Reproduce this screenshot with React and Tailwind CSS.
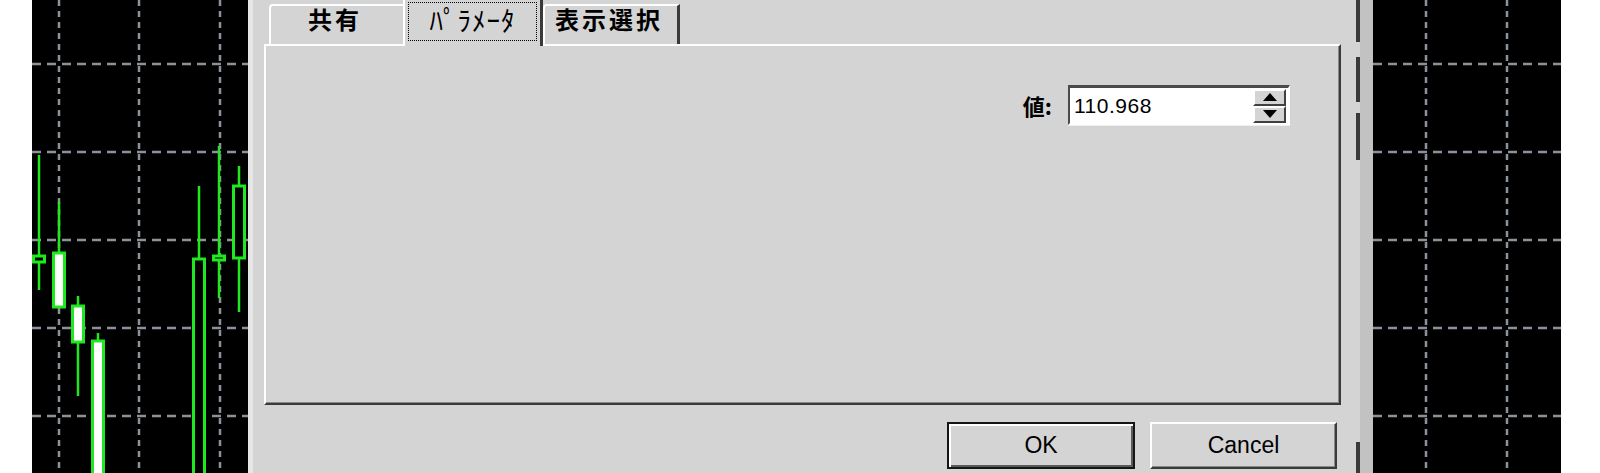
import React from 'react';

const GRID_Y = [64, 152, 240, 328, 416];

const leftCandles = [
  { x: 7, hi: 155, lo: 290, top: 256, bottom: 262, fill: '#000' },
  { x: 27, hi: 202, lo: 307, top: 253, bottom: 307, fill: '#fff' },
  { x: 46, hi: 296, lo: 396, top: 306, bottom: 342, fill: '#fff' },
  { x: 66, hi: 333, lo: 480, top: 341, bottom: 480, fill: '#fff' },
  { x: 167, hi: 186, lo: 480, top: 259, bottom: 480, fill: '#000' },
  { x: 187, hi: 146, lo: 298, top: 256, bottom: 260, fill: '#000' },
  { x: 207, hi: 166, lo: 312, top: 186, bottom: 258, fill: '#000' },
];

function Chart({ width, gridX, candles = [] }) {
  return (
    <svg width={width} height={473} className="block shrink-0 bg-black">
      {GRID_Y.map((y) => (
        <line key={'h' + y} x1={0} x2={width} y1={y} y2={y} stroke="#8c929b" strokeWidth={2.5} strokeDasharray="9 6" />
      ))}
      {gridX.map((x) => (
        <line key={'v' + x} x1={x} x2={x} y1={0} y2={473} stroke="#8c929b" strokeWidth={2.5} strokeDasharray="6 5" />
      ))}
      {candles.map((c, i) => (
        <g key={i}>
          <line x1={c.x} x2={c.x} y1={c.hi} y2={c.lo} stroke="#22e622" strokeWidth={2.5} />
          <rect
            x={c.x - 5.5}
            y={c.top}
            width={11}
            height={Math.max(c.bottom - c.top, 3)}
            fill={c.fill}
            stroke="#1ee81e"
            strokeWidth={3}
          />
        </g>
      ))}
    </svg>
  );
}

function Spinner() {
  return (
    <div className="flex flex-col w-[33px] h-[34px] mr-[2px]">
      <div className="flex-1 flex items-center justify-center bg-[#d4d4d4] border-t-2 border-l-2 border-white border-b-2 border-r-2 border-b-[#404040] border-r-[#404040]">
        <svg width="14" height="8" viewBox="0 0 14 8">
          <polygon points="7,0 14,8 0,8" fill="#000" />
        </svg>
      </div>
      <div className="flex-1 flex items-center justify-center bg-[#d4d4d4] border-t-2 border-l-2 border-white border-b-2 border-r-2 border-b-[#404040] border-r-[#404040]">
        <svg width="14" height="8" viewBox="0 0 14 8">
          <polygon points="0,0 14,0 7,8" fill="#000" />
        </svg>
      </div>
    </div>
  );
}

export default function App() {
  const jp = "font-['Noto_Sans_CJK_JP',sans-serif]";
  return (
    <div className="flex w-[1600px] h-[473px] overflow-hidden bg-white">
      <div className="w-[32px] shrink-0" />
      <Chart width={216} gridX={[27, 107, 188]} candles={leftCandles} />

      {/* dialog */}
      <div className="flex shrink-0 h-[473px] bg-[#d4d4d4] text-black">
        <div className="w-[5px] bg-[#e6e6e6]" />
        <div className="w-[1103px] pl-[11px] pr-[16px] flex flex-col overflow-hidden">
          {/* tabs */}
          <div className={`flex items-end h-[44px] pl-[5px] ${jp} text-[24px] leading-[24px] font-semibold`}>
            <div className="h-[40px] w-[134px] border-t-2 border-l-2 border-white rounded-tl-[4px] flex justify-center pt-[1px] pr-[4px] tracking-[3px]">
              共有
            </div>
            <div className="relative z-10 -mb-[2px] h-[46px] w-[140px] bg-[#d4d4d4] border-l-2 border-white border-r-[3px] border-r-[#3a3a3a] px-[3px] pt-[2px]">
              <div className="h-[39px] border border-dotted border-black flex justify-center pt-[2px] text-[27px] leading-[30px] tracking-[1px] font-normal">
                ﾊﾟﾗﾒｰﾀ
              </div>
            </div>
            <div className="h-[40px] w-[137px] border-t-2 border-l-2 border-white border-r-[3px] border-r-[#3a3a3a] rounded-tl-[4px] flex justify-center pt-[1px] pr-[4px] tracking-[3px]">
              表示選択
            </div>
          </div>

          {/* panel */}
          <div className="w-[1077px] h-[361px] shrink-0 border-2 border-t-white border-l-white border-b-[#3a3a3a] border-r-[#3a3a3a] shadow-[inset_-1px_-1px_0_#8a8a8a]">
            <div className="flex justify-end items-center pr-[49px] mt-[39px]">
              <span className={`${jp} text-[22px] font-semibold mr-[16px]`}>値:</span>
              <div className="flex items-center w-[222px] h-[40px] bg-white border-t-[3px] border-l-2 border-t-[#4a4a4a] border-l-[#4a4a4a] border-b-2 border-r-2 border-b-white border-r-white shadow-[0_1px_0_#eeeeee]">
                <span className="flex-1 pl-[4px] font-['Liberation_Sans',sans-serif] text-[21px] leading-none tracking-[0.5px]">110.968</span>
                <Spinner />
              </div>
            </div>
          </div>

          {/* buttons */}
          <div className="flex justify-end gap-[15px] pr-[3px] mt-[17px] font-['Liberation_Sans',sans-serif] text-[23px]">
            <button className="w-[188px] h-[47px] bg-[#d4d4d4] border-2 border-[#151515] shadow-[inset_2px_2px_0_#ffffff,inset_-2px_-2px_0_#5a5a5a] flex items-center justify-center">
              OK
            </button>
            <button className="w-[187px] h-[47px] bg-[#d4d4d4] border-2 border-t-white border-l-white border-b-[#3a3a3a] border-r-[#3a3a3a] shadow-[inset_-1px_-1px_0_#8a8a8a] flex items-center justify-center">
              Cancel
            </button>
          </div>
        </div>
        {/* broken frame line */}
        <div className="w-[4px] flex flex-col">
          <div className="h-[42px] bg-[#3a3a3a]" />
          <div className="h-[15px]" />
          <div className="h-[45px] bg-[#3a3a3a]" />
          <div className="h-[11px]" />
          <div className="h-[47px] bg-[#3a3a3a]" />
          <div className="h-[282px]" />
          <div className="h-[31px] bg-[#3a3a3a]" />
        </div>
      </div>
      <div className="w-[13px] shrink-0 bg-[#c2c2c2]" />
      <Chart width={188} gridX={[53, 134]} />
      <div className="flex-1 bg-white" />
    </div>
  );
}
